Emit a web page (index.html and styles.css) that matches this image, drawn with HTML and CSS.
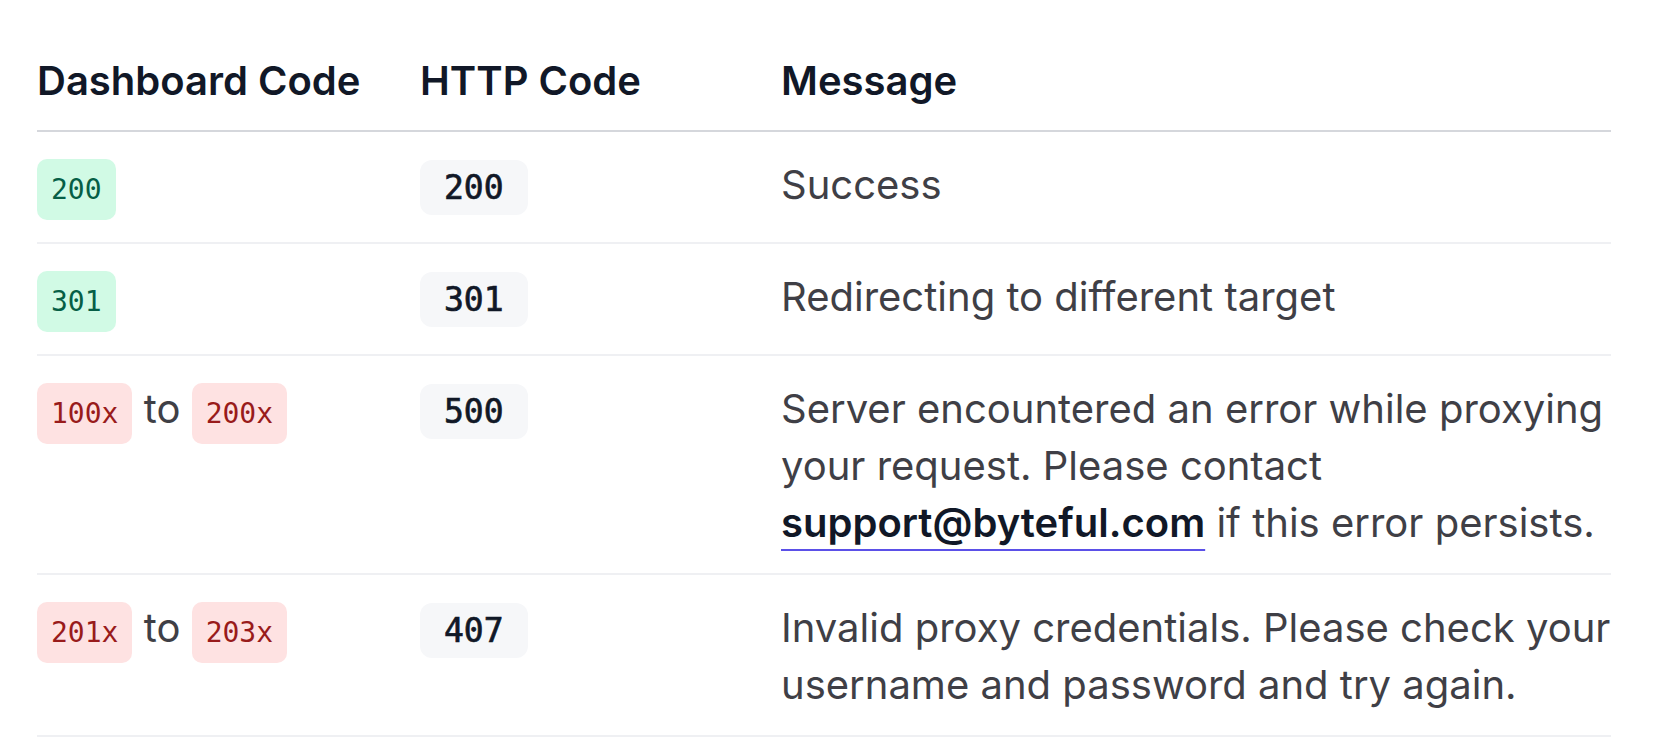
FILE: index.html
```html
<!DOCTYPE html>
<html lang="en">
<head>
<meta charset="utf-8">
<title>Status codes</title>
<link rel="stylesheet" href="styles.css">
</head>
<body>
<div class="page">
  <table class="codes">
    <colgroup>
      <col class="c1">
      <col class="c2">
      <col class="c3">
    </colgroup>
    <thead>
      <tr>
        <th>Dashboard Code</th>
        <th>HTTP Code</th>
        <th>Message</th>
      </tr>
    </thead>
    <tbody>
      <tr>
        <td><code class="tag ok">200</code></td>
        <td><code class="http">200</code></td>
        <td>Success</td>
      </tr>
      <tr>
        <td><code class="tag ok">301</code></td>
        <td><code class="http">301</code></td>
        <td>Redirecting to different target</td>
      </tr>
      <tr>
        <td><code class="tag err">100x</code> to <code class="tag err">200x</code></td>
        <td><code class="http">500</code></td>
        <td>Server encountered an error while proxying your request. Please contact <a class="mail" href="#">support@byteful.com</a> if this error persists.</td>
      </tr>
      <tr>
        <td><code class="tag err">201x</code> to <code class="tag err">203x</code></td>
        <td><code class="http">407</code></td>
        <td>Invalid proxy credentials. Please check your username and password and try again.</td>
      </tr>
    </tbody>
  </table>
</div>
</body>
</html>
```

FILE: styles.css
```css
html, body {
  margin: 0;
  padding: 0;
  background: #ffffff;
}

.page {
  padding: 52px 49px 0 37px;
  font-family: Inter, "Noto Sans", "Liberation Sans", sans-serif;
  font-size: 40px;
  line-height: 57px;
  color: #3f3f46;
}

.codes {
  width: 1574px;
  border-collapse: collapse;
  table-layout: fixed;
}

.c1 { width: 383px; }
.c2 { width: 361px; }
.c3 { width: 830px; }

.codes th {
  text-align: left;
  font-weight: 600;
  color: #111827;
  padding: 0 0 21px 0;
  border-bottom: 2px solid #d5d7dc;
  vertical-align: bottom;
}

.codes td {
  padding: 24px 0 22px 0;
  vertical-align: top;
  border-bottom: 2px solid #eff0f3;
}

.tag {
  display: inline-block;
  font-family: "DejaVu Sans Mono", "Liberation Mono", monospace;
  font-size: 28px;
  line-height: 61px;
  height: 61px;
  padding: 0 14px;
  border-radius: 10px;
}

.tag.ok {
  background: #d1fae5;
  color: #065f46;
}

.tag.err {
  background: #fee2e2;
  color: #991b1b;
}

.http {
  display: inline-block;
  font-family: "DejaVu Sans Mono", "Liberation Mono", monospace;
  font-size: 33px;
  font-weight: 400;
  -webkit-text-stroke: 0.7px #111827;
  line-height: 55px;
  height: 55px;
  padding: 0 24px;
  border-radius: 12px;
  background: #f6f7f9;
  color: #111827;
}

.mail {
  color: #111827;
  font-weight: 600;
  text-decoration: underline;
  text-decoration-color: #5b50e8;
  text-decoration-thickness: 2px;
  text-underline-offset: 12px;
}
```
